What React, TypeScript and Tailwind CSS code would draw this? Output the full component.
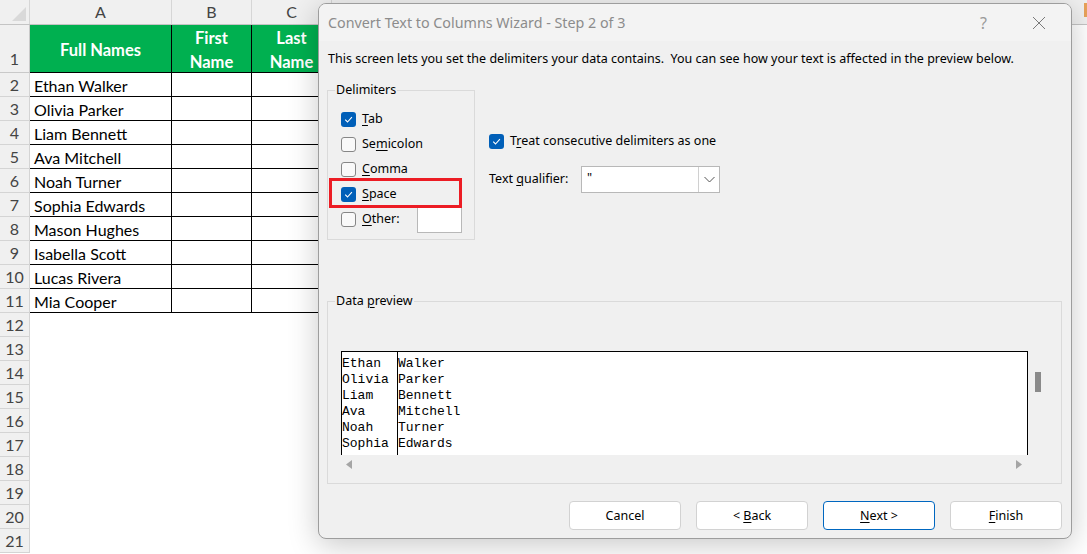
const names = [
  "Ethan Walker",
  "Olivia Parker",
  "Liam Bennett",
  "Ava Mitchell",
  "Noah Turner",
  "Sophia Edwards",
  "Mason Hughes",
  "Isabella Scott",
  "Lucas Rivera",
  "Mia Cooper",
];

const preview = [
  ["Ethan", "Walker"],
  ["Olivia", "Parker"],
  ["Liam", "Bennett"],
  ["Ava", "Mitchell"],
  ["Noah", "Turner"],
  ["Sophia", "Edwards"],
];

function Box({ checked }: { checked?: boolean }) {
  if (checked) {
    return (
      <span className="flex h-[15px] w-[15px] shrink-0 items-center justify-center rounded-[3px] bg-[#005fb8]">
        <svg width="15" height="15" viewBox="0 0 15 15">
          <path d="M4.2 7.7 L6.5 10 L10.9 5.2" fill="none" stroke="white" strokeWidth="1.1" />
        </svg>
      </span>
    );
  }
  return <span className="h-[15px] w-[15px] shrink-0 rounded-[3px] border border-[#868686] bg-[#f9f9f9]" />;
}

function U({ children }: { children: string }) {
  return <span className="underline decoration-1 underline-offset-[2px]">{children}</span>;
}

function Sheet() {
  return (
    <div className="flex flex-col font-['Lato'] text-[16px] text-black">
      <div className="flex h-[25px] border-b border-[#c4c4c4] bg-[#f0f0f0] text-[#444]">
        <div className="relative w-[30px] shrink-0 border-r border-[#d6d6d6]">
          <svg className="absolute bottom-[3px] right-[3px]" width="14" height="14" viewBox="0 0 14 14">
            <path d="M14 0 L14 14 L0 14 Z" fill="#d9d9d9" />
          </svg>
        </div>
        <div className="flex w-[142px] shrink-0 items-center justify-center border-r border-[#d6d6d6]">A</div>
        <div className="flex w-[80px] shrink-0 items-center justify-center border-r border-[#d6d6d6]">B</div>
        <div className="flex w-[80px] shrink-0 items-center justify-center border-r border-[#d6d6d6]">C</div>
        <div className="flex-1" />
      </div>

      <div className="flex h-[48px]">
        <div className="flex w-[30px] shrink-0 items-end justify-center border-r border-b border-[#c9c9c9] bg-[#f0f0f0] pb-[1px] text-[#444]">
          1
        </div>
        <div className="flex w-[142px] shrink-0 items-center justify-center border-r border-b border-black bg-[#00b050] pt-[3px] text-[16.5px] font-bold text-white">
          Full Names
        </div>
        <div className="flex w-[80px] shrink-0 items-center justify-center border-r border-b border-black bg-[#00b050] pt-[3px] text-center text-[16.5px] font-bold leading-[24px] text-white">
          First
          <br />
          Name
        </div>
        <div className="flex w-[80px] shrink-0 items-center justify-center border-r border-b border-black bg-[#00b050] pt-[3px] text-center text-[16.5px] font-bold leading-[24px] text-white">
          Last
          <br />
          Name
        </div>
      </div>

      {names.map((n, i) => (
        <div key={n} className="flex h-[24px]">
          <div className="flex w-[30px] shrink-0 items-center justify-center border-r border-b border-[#d4d4d4] bg-[#f0f0f0] text-[#444]">
            {i + 2}
          </div>
          <div className="flex w-[142px] shrink-0 items-center border-r border-b border-black pl-[4px] pt-[2px]">{n}</div>
          <div className="w-[80px] shrink-0 border-r border-b border-black" />
          <div className="w-[80px] shrink-0 border-r border-b border-black" />
        </div>
      ))}

      {Array.from({ length: 10 }, (_, i) => (
        <div key={i} className="flex h-[24px]">
          <div className="flex w-[30px] shrink-0 items-center justify-center border-r border-b border-[#d4d4d4] bg-[#f0f0f0] text-[#444]">
            {i + 12}
          </div>
        </div>
      ))}
    </div>
  );
}

function Dialog() {
  return (
    <div className="absolute left-[318px] top-[3px] flex h-[536px] w-[754px] flex-col overflow-hidden rounded-[8px] border border-[#9d9d9d] bg-[#f0f0f0] font-['Noto_Sans'] text-[12.5px] text-black shadow-[0_6px_30px_rgba(0,0,0,0.22)]">
      <div className="flex h-[37px] shrink-0 items-center bg-[#f3f3f3] pl-[9px]">
        <span className="text-[14.3px] text-[#8c8c8c]">Convert Text to Columns Wizard - Step 2 of 3</span>
        <span className="ml-auto mr-[45px] text-[16px] text-[#9a9a9a]">?</span>
        <svg className="mr-[25px]" width="14" height="14" viewBox="0 0 14 14">
          <path d="M1 1 L13 13 M13 1 L1 13" stroke="#7a7a7a" strokeWidth="1" />
        </svg>
      </div>

      <div className="flex flex-1 flex-col px-[8px]">
        <p className="mt-[10px] pl-[1px] leading-[16px]">
          This screen lets you set the delimiters your data contains.&nbsp; You can see how your text is affected in
          the preview below.
        </p>

        <div className="mt-[23px] flex">
          <div className="relative h-[150px] w-[148px] shrink-0 border border-[#dadada] pl-[13px] pt-[16px]">
            <span className="absolute -top-[9px] left-[7px] bg-[#f0f0f0] px-[1px] leading-[16px]">Delimiters</span>
            <div className="flex h-[25px] items-center gap-[6px]">
              <Box checked />
              <span>
                <U>T</U>ab
              </span>
            </div>
            <div className="flex h-[25px] items-center gap-[6px]">
              <Box />
              <span>
                Se<U>m</U>icolon
              </span>
            </div>
            <div className="flex h-[25px] items-center gap-[6px]">
              <Box />
              <span>
                <U>C</U>omma
              </span>
            </div>
            <div className="flex h-[25px] items-center gap-[6px]">
              <Box checked />
              <span>
                <U>S</U>pace
              </span>
            </div>
            <div className="flex h-[25px] items-center gap-[6px]">
              <Box />
              <span className="w-[49px]">
                <U>O</U>ther:
              </span>
              <span className="h-[26px] w-[45px] border border-[#b8b8b8] bg-white" />
            </div>
            <span className="absolute left-[1px] top-[87px] h-[30px] w-[133px] border-[3px] border-[#ec1c24]" />
          </div>

          <div className="ml-[14px] flex flex-col pt-[42px]">
            <div className="flex h-[18px] items-center gap-[6px]">
              <Box checked />
              <span>
                T<U>r</U>eat consecutive delimiters as one
              </span>
            </div>
            <div className="mt-[16px] flex items-center">
              <span className="w-[92px]">
                Text <U>q</U>ualifier:
              </span>
              <div className="flex h-[27px] w-[139px] border border-[#b8b8b8] bg-white">
                <span className="flex-1 pl-[5px] pt-[3px] leading-[16px]">"</span>
                <span className="flex w-[21px] items-center justify-center border-l border-[#d0d0d0]">
                  <svg width="11" height="7" viewBox="0 0 11 7">
                    <path d="M0.5 1 L5.5 6 L10.5 1" fill="none" stroke="#555" strokeWidth="1" />
                  </svg>
                </span>
              </div>
            </div>
          </div>
        </div>

        <div className="relative mt-[61px] h-[183px] w-[735px] border border-[#dadada] pl-[13px] pt-[49px]">
          <span className="absolute -top-[9px] left-[7px] bg-[#f0f0f0] px-[1px] leading-[16px]">
            Data <U>p</U>review
          </span>
          <div className="flex">
            <div className="flex w-[687px] flex-col">
              <div className="flex h-[104px] border-x border-t border-black bg-white font-['Liberation_Mono'] text-[13px] leading-[16px]">
                <div className="w-[56px] border-r border-black pt-[4px]">
                  {preview.map((r) => (
                    <div key={r[0]}>{r[0]}</div>
                  ))}
                </div>
                <div className="pt-[4px]">
                  {preview.map((r) => (
                    <div key={r[1]}>{r[1]}</div>
                  ))}
                </div>
              </div>
              <div className="flex h-[18px] items-center justify-between px-[5px]">
                <svg width="6" height="9" viewBox="0 0 6 9">
                  <path d="M6 0 L0 4.5 L6 9 Z" fill="#a5a5a5" />
                </svg>
                <svg className="mr-[1px]" width="6" height="9" viewBox="0 0 6 9">
                  <path d="M0 0 L6 4.5 L0 9 Z" fill="#a5a5a5" />
                </svg>
              </div>
            </div>
            <div className="ml-[7px] pt-[21px]">
              <div className="h-[20px] w-[6px] bg-[#8a8a8a]" />
            </div>
          </div>
        </div>

        <div className="mt-[17px] flex justify-end gap-[15px] pr-[1px]">
          <button className="h-[29px] w-[112px] rounded-[4px] border border-[#d2d2d2] bg-white pt-[1px]">Cancel</button>
          <button className="h-[29px] w-[112px] rounded-[4px] border border-[#d2d2d2] bg-white pt-[1px]">
            &lt; <U>B</U>ack
          </button>
          <button className="h-[29px] w-[112px] rounded-[4px] border border-[#0067c0] bg-white pt-[1px]">
            <U>N</U>ext &gt;
          </button>
          <button className="h-[29px] w-[112px] rounded-[4px] border border-[#d2d2d2] bg-white pt-[1px]">
            <U>F</U>inish
          </button>
        </div>
      </div>
    </div>
  );
}

export default function App() {
  return (
    <div className="relative h-[554px] w-[1087px] overflow-hidden bg-white">
      <Sheet />
      <span className="absolute right-0 top-[3px] h-[14px] w-[3px] bg-[#e8a25a]" />
      <Dialog />
    </div>
  );
}
